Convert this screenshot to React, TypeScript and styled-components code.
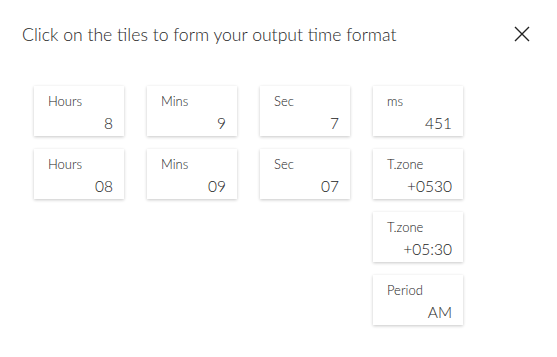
import React from "react";
import styled, { createGlobalStyle } from "styled-components";

const GlobalStyle = createGlobalStyle`
  body {
    margin: 0;
    background: #ffffff;
    font-family: Lato, "Open Sans", sans-serif;
    color: #444444;
  }
`;

const Dialog = styled.div`
  width: 557px;
  height: 357px;
  display: flex;
  flex-direction: column;
`;

const Header = styled.div`
  display: flex;
  justify-content: space-between;
  align-items: center;
  padding: 20px 26px 0 22px;
  height: 28px;
`;

const Title = styled.h1`
  margin: 0;
  font-size: 17.6px;
  font-weight: 300;
  color: #1f1f1f;
`;

const CloseButton = styled.button`
  border: none;
  background: none;
  padding: 0;
  width: 18px;
  height: 18px;
  display: flex;
  cursor: pointer;
`;

const TileGrid = styled.div`
  display: grid;
  grid-template-columns: repeat(4, 90px);
  grid-auto-rows: 50px;
  column-gap: 23px;
  row-gap: 13px;
  padding: 38px 0 0 34px;
`;

const Tile = styled.div<{ $col?: number }>`
  grid-column: ${(p) => p.$col ?? "auto"};
  display: flex;
  flex-direction: column;
  justify-content: space-between;
  padding: 7px 11px 3px 14px;
  box-sizing: border-box;
  background: #ffffff;
  box-shadow: 0 1px 3px rgba(0, 0, 0, 0.22);
  cursor: pointer;
`;

const Label = styled.span`
  font-size: 13px;
  line-height: 16px;
  font-weight: 300;
  color: #222222;
`;

const Value = styled.span`
  font-size: 15.5px;
  line-height: 20px;
  font-weight: 300;
  text-align: right;
  color: #222222;
`;

const tiles: { label: string; value: string; col?: number }[] = [
  { label: "Hours", value: "8" },
  { label: "Mins", value: "9" },
  { label: "Sec", value: "7" },
  { label: "ms", value: "451" },
  { label: "Hours", value: "08" },
  { label: "Mins", value: "09" },
  { label: "Sec", value: "07" },
  { label: "T.zone", value: "+0530" },
  { label: "T.zone", value: "+05:30", col: 4 },
  { label: "Period", value: "AM", col: 4 },
];

const App = () => {
  return (
    <Dialog>
      <GlobalStyle />
      <Header>
        <Title>Click on the tiles to form your output time format</Title>
        <CloseButton aria-label="close">
          <svg width="18" height="18" viewBox="0 0 18 18">
            <path d="M2 2L16 16M16 2L2 16" stroke="#222" strokeWidth="1.4" />
          </svg>
        </CloseButton>
      </Header>
      <TileGrid>
        {tiles.map((t, i) => (
          <Tile key={i} $col={t.col}>
            <Label>{t.label}</Label>
            <Value>{t.value}</Value>
          </Tile>
        ))}
      </TileGrid>
    </Dialog>
  );
};

export default App;
